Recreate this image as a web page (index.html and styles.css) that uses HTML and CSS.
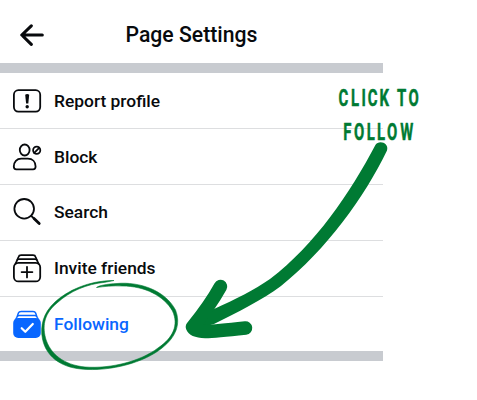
FILE: index.html
```html
<!DOCTYPE html>
<html lang="en">
<head>
<meta charset="UTF-8">
<meta name="viewport" content="width=device-width, initial-scale=1.0">
<title>Page Settings</title>
<link rel="stylesheet" href="styles.css">
</head>
<body>

<div class="settings">
    <header class="header">
        <svg class="back" width="24" height="22" viewBox="0 0 24 22">
            <path d="M11.3 1.8 L1.8 11 L11.3 20.4 M2 11 H22.3"/>
        </svg>
        <h1>Page Settings</h1>
    </header>

    <ul class="menu">
        <li class="item">
            <svg class="icon" width="30" height="30" viewBox="0 0 30 30">
                <rect x="1.9" y="4.2" width="26.3" height="21.4" rx="4.5"/>
                <path class="solid" d="M13.2 8.8 Q15.2 7.2 17.2 8.8 L16.3 17.6 H14.1 Z"/>
                <circle class="solid" cx="15.2" cy="20.8" r="1.7"/>
            </svg>
            <span>Report profile</span>
        </li>
        <li class="item">
            <svg class="icon" width="30" height="30" viewBox="0 0 30 30">
                <ellipse cx="12.7" cy="8" rx="4.9" ry="5.5"/>
                <path d="M4.3 27.3 H21.1 Q23.6 27.3 23.6 24.5 C23.6 19.8 20.5 16.6 15.8 16.6 H9.3 C4.8 16.6 1.8 19.8 1.8 24.5 Q1.8 27.3 4.3 27.3 Z"/>
                <circle cx="24.7" cy="8.3" r="3.6"/>
                <path d="M22.2 10.8 L27.2 5.8"/>
            </svg>
            <span>Block</span>
        </li>
        <li class="item">
            <svg class="icon" width="30" height="30" viewBox="0 0 30 30">
                <circle cx="12.2" cy="11.8" r="9.8"/>
                <path d="M19.3 19 L22.2 21.7"/>
                <path class="handle" d="M22 21.5 L27.2 26.6"/>
            </svg>
            <span>Search</span>
        </li>
        <li class="item">
            <svg class="icon" width="30" height="30" viewBox="0 0 30 30">
                <rect x="1.9" y="9.8" width="26.3" height="18.6" rx="4.5"/>
                <path d="M3.6 10.6 L4.6 8.3 Q5.2 6.2 7 6.2 H23 Q24.9 6.2 25.5 8.3 L26.5 10.6"/>
                <path d="M5.4 6.5 L6.5 4 Q7 2.2 9.2 2.2 H21 Q23.1 2.2 23.6 4 L24.7 6.5"/>
                <path d="M15 13.8 V24.4 M9.6 19.1 H20.4"/>
            </svg>
            <span>Invite friends</span>
        </li>
        <li class="item active">
            <svg class="icon" width="30" height="30" viewBox="0 0 30 30">
                <path class="lid" d="M5.4 7 L6.4 4.1 Q7 2.5 9.2 2.5 H21 Q23.1 2.5 23.6 4.1 L24.6 7"/>
                <path class="lid" d="M3.5 11 L4.8 8.2 Q5.4 6.4 7.4 6.4 H22.6 Q24.6 6.4 25.2 8.2 L26.5 11"/>
                <rect class="solid" x="1.2" y="9" width="27.6" height="20" rx="5"/>
                <path class="check" d="M9.7 19.2 L13.3 22.8 L20.8 15"/>
            </svg>
            <span>Following</span>
        </li>
    </ul>
</div>

<!-- hand drawn notes over the menu -->
<svg class="notes" width="477" height="400" viewBox="0 0 477 400">
    <text class="note" transform="translate(338 106) scale(.62 1)" x="8.7 27.5 41.6 56 74.5 88 102.5 122">CLICK TO</text>
    <text class="note" transform="translate(341.8 140) scale(.62 1)" x="9 28 46.8 63.2 81 104.7">FOLLOW</text>

    <path class="shaft" d="M375.4 145 C378.5 139.5 389.5 142.5 387 150.5 C364 198 326 250 281 286 C262 300 238 312 214 324 L192 330 L190 320 L214 309 C236 299 254 290 270 279 C315 245 350 193 375.4 145 Z"/>
    <path class="head" d="M220.5 286.5 C213 300 203 314 192.5 327 C195 333 206 332.5 245.5 328 "/>
    <path class="ring" d="M114 280.5 C88 280.5 67 291 55 302 C43 313 40 326 42.5 339 C46 356 60 367 81 369 C111 372 145 362 162 348 C176 337 181 324 175.5 310 C165 290 139 281.5 117 283.5 C107 284 99 285.5 96.5 287.5 C104 286.5 113 285.5 122 286 C145 286 164 296 172.5 311 C179 325 173 338 158 348 C141 361 111 369 85 367 C64 365 50 354 45.5 338 C42 324 45 313 57 303 C70 291 87 284 105 282.3 Z"/>
</svg>

</body>
</html>
```
FILE: styles.css
```css
body {
    margin: 0;
    font-family: Roboto, sans-serif;
    background-color: #fff;
    color: #080a0d;
    overflow: hidden;
}
.settings {
    width: 383px;
    height: 361px;
    box-sizing: border-box;
    border-bottom: 10px solid #c8cbd0;
}
.header {
    display: flex;
    align-items: center;
    height: 73px;
    box-sizing: border-box;
    padding: 7px 0 0 20px;
    border-bottom: 10px solid #c8cbd0;
}
.back {
    fill: none;
    stroke: #080a0d;
    stroke-width: 3.1;
    stroke-linecap: round;
    stroke-linejoin: round;
}
h1 {
    margin: 0 0 0 81.5px;
    font-size: 21.2px;
    font-weight: 500;
    line-height: 24px;
}
.menu {
    display: grid;
    grid-template-rows: repeat(4, 56px) 54px;
    margin: 0;
    padding: 0;
    list-style: none;
}
.item {
    display: flex;
    align-items: center;
    gap: 12px;
    padding-left: 12px;
    border-bottom: 1px solid #dddee0;
    font-size: 17.4px;
    font-weight: 500;
}
.item:nth-child(n+3) {
    padding-bottom: 1px;
}
.item:last-child {
    padding-bottom: 0;
    border-bottom: none;
}
.icon {
    fill: none;
    stroke: #080a0d;
    stroke-width: 1.8;
    stroke-linecap: round;
    stroke-linejoin: round;
}
.icon .solid {
    fill: #080a0d;
    stroke: none;
}
.icon .handle {
    stroke-width: 2.8;
}
.active {
    color: #0866ff;
}
.active .icon .solid {
    fill: #0866ff;
}
.active .icon .lid {
    stroke: #0866ff;
    stroke-width: 1.5;
}
.active .icon .check {
    stroke: #fff;
    stroke-width: 2.2;
}
.notes {
    position: absolute;
    top: 0;
    left: 0;
}
.note {
    font-size: 24px;
    font-weight: 700;
    text-anchor: middle;
    fill: #007a33;
    stroke: #007a33;
    stroke-width: .5;
    stroke-linejoin: round;
}
.shaft {
    fill: #007a33;
}
.head {
    fill: none;
    stroke: #007a33;
    stroke-width: 13.5;
    stroke-linecap: round;
    stroke-linejoin: round;
}
.ring {
    fill: #007a33;
    stroke: #007a33;
    stroke-width: .6;
}
```
